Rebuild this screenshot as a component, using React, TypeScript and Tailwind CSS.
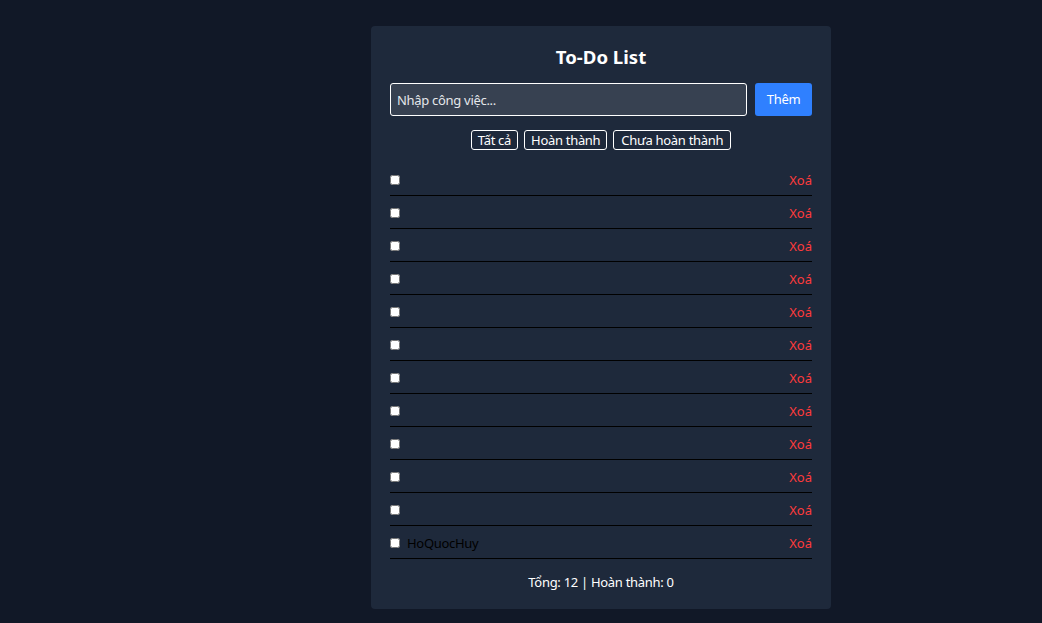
import React, { useState } from "react";

type Todo = { id: number; text: string; done: boolean };

const initialTodos: Todo[] = [
  ...Array.from({ length: 11 }, (_, i) => ({ id: i + 1, text: "", done: false })),
  { id: 12, text: "HoQuocHuy", done: false },
];

export default function App() {
  const [todos, setTodos] = useState<Todo[]>(initialTodos);
  const [input, setInput] = useState("");
  const [filter, setFilter] = useState<"all" | "done" | "todo">("all");

  const visible = todos.filter((t) => (filter === "all" ? true : filter === "done" ? t.done : !t.done));
  const doneCount = todos.filter((t) => t.done).length;

  const addTodo = () => {
    setTodos([...todos, { id: Date.now(), text: input, done: false }]);
    setInput("");
  };

  return (
    <div className="min-h-screen bg-[#111827] pl-[371px] pt-[26px] pb-[14px] font-['Noto_Sans',sans-serif] text-[13px] tracking-[-0.3px] text-white">
      <div className="w-[460px] rounded-[4px] bg-[#1e293b] px-[19px] pt-[20px] pb-[18px]">
        <h2 className="text-center text-[18.6px] font-bold leading-[22px] tracking-normal">To-Do List</h2>

        <div className="mt-[15px] flex gap-[8px]">
          <input
            value={input}
            onChange={(e) => setInput(e.target.value)}
            placeholder="Nhập công việc..."
            className="h-[33px] flex-1 rounded-[3px] border border-white bg-[#374151] px-[6px] text-[13px] tracking-[-0.3px] text-white placeholder:text-[#e5e7eb] outline-none"
          />
          <button
            type="button"
            onClick={addTodo}
            className="h-[33px] w-[57px] rounded-[3px] bg-[#2f80ff] text-[13px] text-white"
          >
            Thêm
          </button>
        </div>

        <div className="mt-[14px] flex justify-center gap-[6px]">
          <button type="button" onClick={() => setFilter("all")} className="h-[20px] rounded-[3px] border border-white px-[6px] leading-[18px]">
            Tất cả
          </button>
          <button type="button" onClick={() => setFilter("done")} className="h-[20px] rounded-[3px] border border-white px-[6px] leading-[18px]">
            Hoàn thành
          </button>
          <button type="button" onClick={() => setFilter("todo")} className="h-[20px] rounded-[3px] border border-white px-[7px] leading-[18px]">
            Chưa hoàn thành
          </button>
        </div>

        <ul className="mt-[13px]">
          {visible.map((t) => (
            <li key={t.id} className="flex h-[33px] items-center justify-between border-b border-black pt-[3px]">
              <label className="flex items-center gap-[7px] text-black">
                <input
                  type="checkbox"
                  checked={t.done}
                  onChange={() => setTodos(todos.map((x) => (x.id === t.id ? { ...x, done: !x.done } : x)))}
                  className="m-0 h-[10px] w-[10px] -translate-y-[1px]"
                />
                <span className={t.done ? "line-through" : ""}>{t.text}</span>
              </label>
              <button
                type="button"
                onClick={() => setTodos(todos.filter((x) => x.id !== t.id))}
                className="tracking-normal text-[#ff3b3b]"
              >
                Xoá
              </button>
            </li>
          ))}
        </ul>

        <p className="mt-[14px] text-center leading-[18px]">
          Tổng: {todos.length} | Hoàn thành: {doneCount}
        </p>
      </div>
    </div>
  );
}
